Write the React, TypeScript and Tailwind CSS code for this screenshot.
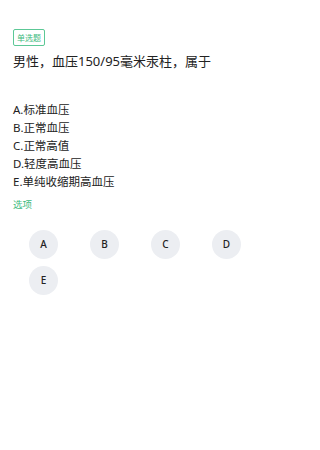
const options = [
  { key: 'A', text: '标准血压' },
  { key: 'B', text: '正常血压' },
  { key: 'C', text: '正常高值' },
  { key: 'D', text: '轻度高血压' },
  { key: 'E', text: '单纯收缩期高血压' },
];

export default function App() {
  return (
    <div
      className="min-h-[450px] w-[270px] bg-white px-[13px] pt-[29px] text-[#222]"
      style={{ fontFamily: '"Noto Sans", "Noto Sans CJK SC", sans-serif' }}
    >
      {/* Question type tag */}
      <div className="flex">
        <div className="flex h-[17px] items-center rounded-[2px] border border-[#5cc896] px-[3px] text-[8px] leading-none text-[#3dba7e]">
          单选题
        </div>
      </div>

      {/* Question */}
      <h1 className="mt-[4px] text-[13px] leading-[22px] font-normal">
        男性，血压150/95毫米汞柱，属于
      </h1>

      {/* Options list */}
      <ul className="mt-[29px] text-[11.5px] leading-[18px]">
        {options.map((o) => (
          <li key={o.key}>
            {o.key}.{o.text}
          </li>
        ))}
      </ul>

      <div className="mt-[7px] text-[9.5px] leading-[14px] text-[#3dba7e]">选项</div>

      {/* Answer buttons */}
      <div className="mt-[18px] grid grid-cols-4 gap-y-[7px]">
        {options.map((o) => (
          <div key={o.key} className="flex justify-center">
            <button className="flex h-[29px] w-[29px] items-center justify-center rounded-full bg-[#eceef2] text-[10px] font-medium text-[#222]">
              {o.key}
            </button>
          </div>
        ))}
      </div>
    </div>
  );
}
